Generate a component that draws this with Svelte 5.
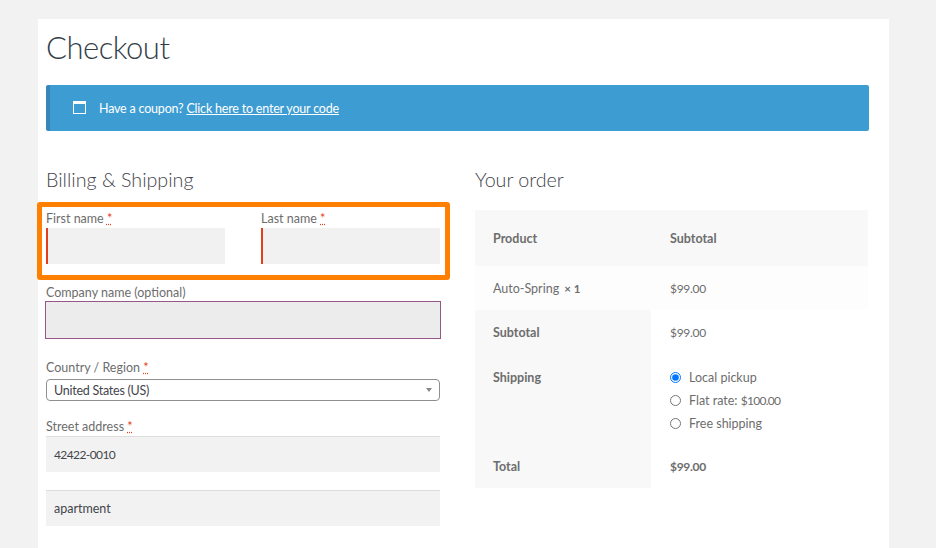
<script>
  const shipping = [
    { label: "Local pickup", checked: true },
    { label: "Flat rate: ", price: "$100.00", checked: false },
    { label: "Free shipping", checked: false }
  ];
</script>

<div class="page">
  <main class="card">
    <h1>Checkout</h1>

    <div class="notice">
      <svg class="notice-icon" width="14" height="14" viewBox="0 0 14 14" aria-hidden="true">
        <rect x="0.5" y="0.5" width="12" height="12" fill="none" stroke="#fff" />
        <rect x="0" y="0" width="13" height="3" fill="#fff" />
      </svg>
      <span class="notice-text">Have a coupon? <a href="#coupon">Click here to enter your code</a></span>
    </div>

    <div class="columns">
      <section class="billing">
        <h3>Billing &amp; Shipping</h3>

        <div class="names">
          <div class="field">
            <label for="first">First name <abbr>*</abbr></label>
            <input id="first" class="invalid" type="text" />
          </div>
          <div class="field">
            <label for="last">Last name <abbr>*</abbr></label>
            <input id="last" class="invalid" type="text" />
          </div>
        </div>

        <div class="field company">
          <label for="company">Company name (optional)</label>
          <input id="company" class="focused" type="text" />
        </div>

        <div class="field country">
          <label for="country">Country / Region <abbr>*</abbr></label>
          <div id="country" class="select">
            <span>United States (US)</span>
            <i class="arrow"></i>
          </div>
        </div>

        <div class="field street">
          <label for="street">Street address <abbr>*</abbr></label>
          <input id="street" class="digits" type="text" value="42422-0010" />
        </div>
        <input class="apartment" type="text" value="apartment" />
      </section>

      <section class="order">
        <h3>Your order</h3>
        <table>
          <thead>
            <tr>
              <th class="name">Product</th>
              <th>Subtotal</th>
            </tr>
          </thead>
          <tbody>
            <tr class="item">
              <td class="name">Auto-Spring <strong>× 1</strong></td>
              <td><span class="price">$99.00</span></td>
            </tr>
          </tbody>
          <tfoot>
            <tr class="sub">
              <th class="name">Subtotal</th>
              <td><span class="price">$99.00</span></td>
            </tr>
            <tr class="ship">
              <th class="name">Shipping</th>
              <td>
                <ul>
                  {#each shipping as option}
                    <li>
                      <label>
                        <input type="radio" name="shipping" checked={option.checked} />
                        <span>{option.label}{#if option.price}<span class="price tight">{option.price}</span>{/if}</span>
                      </label>
                    </li>
                  {/each}
                </ul>
              </td>
            </tr>
            <tr class="total">
              <th class="name">Total</th>
              <td><strong class="price">$99.00</strong></td>
            </tr>
          </tfoot>
        </table>
      </section>
    </div>
  </main>
</div>

<style>
  :global(html),
  :global(body) {
    margin: 0;
    overflow: hidden;
    background: #f2f2f2;
  }

  .page {
    height: 548px;
    overflow: hidden;
    padding: 19px 47px 0 38px;
    box-sizing: border-box;
    font-family: "Lato", "Open Sans", sans-serif;
    font-size: 12.5px;
    color: #6d6d6d;
  }

  .card {
    background: #fff;
    height: 600px;
    padding: 0 20px 0 8px;
  }

  h1 {
    margin: 0;
    padding-top: 9px;
    height: 56px;
    box-sizing: border-box;
    font-size: 31px;
    line-height: 38px;
    font-weight: 300;
    letter-spacing: -0.5px;
    color: #333e48;
  }

  .notice {
    display: flex;
    align-items: center;
    height: 46px;
    margin-top: 10px;
    padding-left: 23px;
    background: #3d9cd2;
    border-left: 4px solid #3487b6;
    border-radius: 2px;
    color: #fff;
    letter-spacing: -0.2px;
  }

  .notice-icon {
    margin-right: 12px;
  }

  .notice-text {
    margin-top: 1px;
  }

  .notice a {
    color: #fff;
  }

  .columns {
    display: grid;
    grid-template-columns: 394px 393px;
    gap: 35px;
    margin-top: 35px;
  }

  h3 {
    margin: 0;
    height: 28px;
    font-size: 19.7px;
    line-height: 27px;
    font-weight: 300;
    color: #43454b;
  }

  .field {
    display: flex;
    flex-direction: column;
  }

  label {
    display: block;
    font-size: 12.5px;
    line-height: 16px;
    color: #6d6d6d;
  }

  abbr {
    color: #e2401c;
    text-decoration: underline dotted;
  }

  input[type="text"] {
    display: block;
    box-sizing: border-box;
    width: 100%;
    height: 36px;
    margin: 0;
    padding: 0 8px;
    border: 0;
    border-top: 1px solid #ddd;
    background: #f2f2f2;
    font: inherit;
    color: #43454b;
    outline: none;
  }

  input.digits {
    font-size: 12px;
    letter-spacing: -0.6px;
  }

  .names {
    display: grid;
    grid-template-columns: 179px 179px;
    gap: 36px;
    box-sizing: border-box;
    height: 78px;
    width: 413px;
    margin: 8px 0 0 -9px;
    padding: 4px 5px 0 4px;
    border: 5px solid #ff8000;
    border-radius: 3px;
  }

  .names label {
    margin-bottom: 1px;
  }

  input.invalid {
    border-top: 0;
    border-left: 2px solid #e2401c;
    background: #f1f1f1;
  }

  .company {
    margin-top: 5px;
  }

  input.focused {
    width: 396px;
    height: 38px;
    margin-left: -1px;
    border: 1px solid #96588a;
    background: #ececec;
  }

  .country {
    margin-top: 21px;
  }

  .select {
    display: flex;
    align-items: center;
    justify-content: space-between;
    box-sizing: border-box;
    height: 22px;
    margin-top: 3px;
    padding: 0 7px;
    border: 1px solid #8f8f8f;
    border-radius: 4px;
    color: #43454b;
    font-size: 12.5px;
    letter-spacing: -0.25px;
  }

  .arrow {
    width: 0;
    height: 0;
    border-left: 3px solid transparent;
    border-right: 3px solid transparent;
    border-top: 4px solid #888;
  }

  .street {
    margin-top: 18px;
  }

  .street label {
    margin-bottom: 1px;
  }

  .apartment {
    margin-top: 18px !important;
  }

  table {
    width: 393px;
    margin-top: 16px;
    border-collapse: collapse;
    table-layout: fixed;
    font-size: 12.5px;
  }

  th,
  td {
    padding: 0 18px;
    text-align: left;
    font-weight: 400;
  }

  th {
    font-weight: 700;
    color: #6d6d6d;
  }

  .name {
    width: 140px;
  }

  th:not(.name),
  td:not(.name) {
    padding-left: 19px;
  }

  .price {
    font-size: 12px;
    letter-spacing: -0.3px;
  }

  .price.tight {
    letter-spacing: -0.7px;
  }

  thead tr {
    height: 56px;
    background: #f8f8f8;
  }

  .item {
    height: 44px;
    background: #fdfdfd;
  }

  .item strong {
    font-size: 11.5px;
    margin-left: 2px;
  }

  tfoot th {
    background: #f8f8f8;
  }

  .sub {
    height: 44px;
  }

  .ship {
    height: 90px;
  }

  .ship th {
    vertical-align: top;
    padding-top: 16px;
  }

  .ship td {
    vertical-align: top;
    padding-top: 12px;
  }

  .total {
    height: 44px;
  }

  ul {
    margin: 0;
    padding: 0;
    list-style: none;
  }

  li {
    height: 23px;
  }

  li label {
    display: flex;
    align-items: center;
    line-height: 23px;
  }

  input[type="radio"] {
    width: 11px;
    height: 11px;
    margin: 0 8px 0 0;
    accent-color: #0075ff;
  }
</style>
